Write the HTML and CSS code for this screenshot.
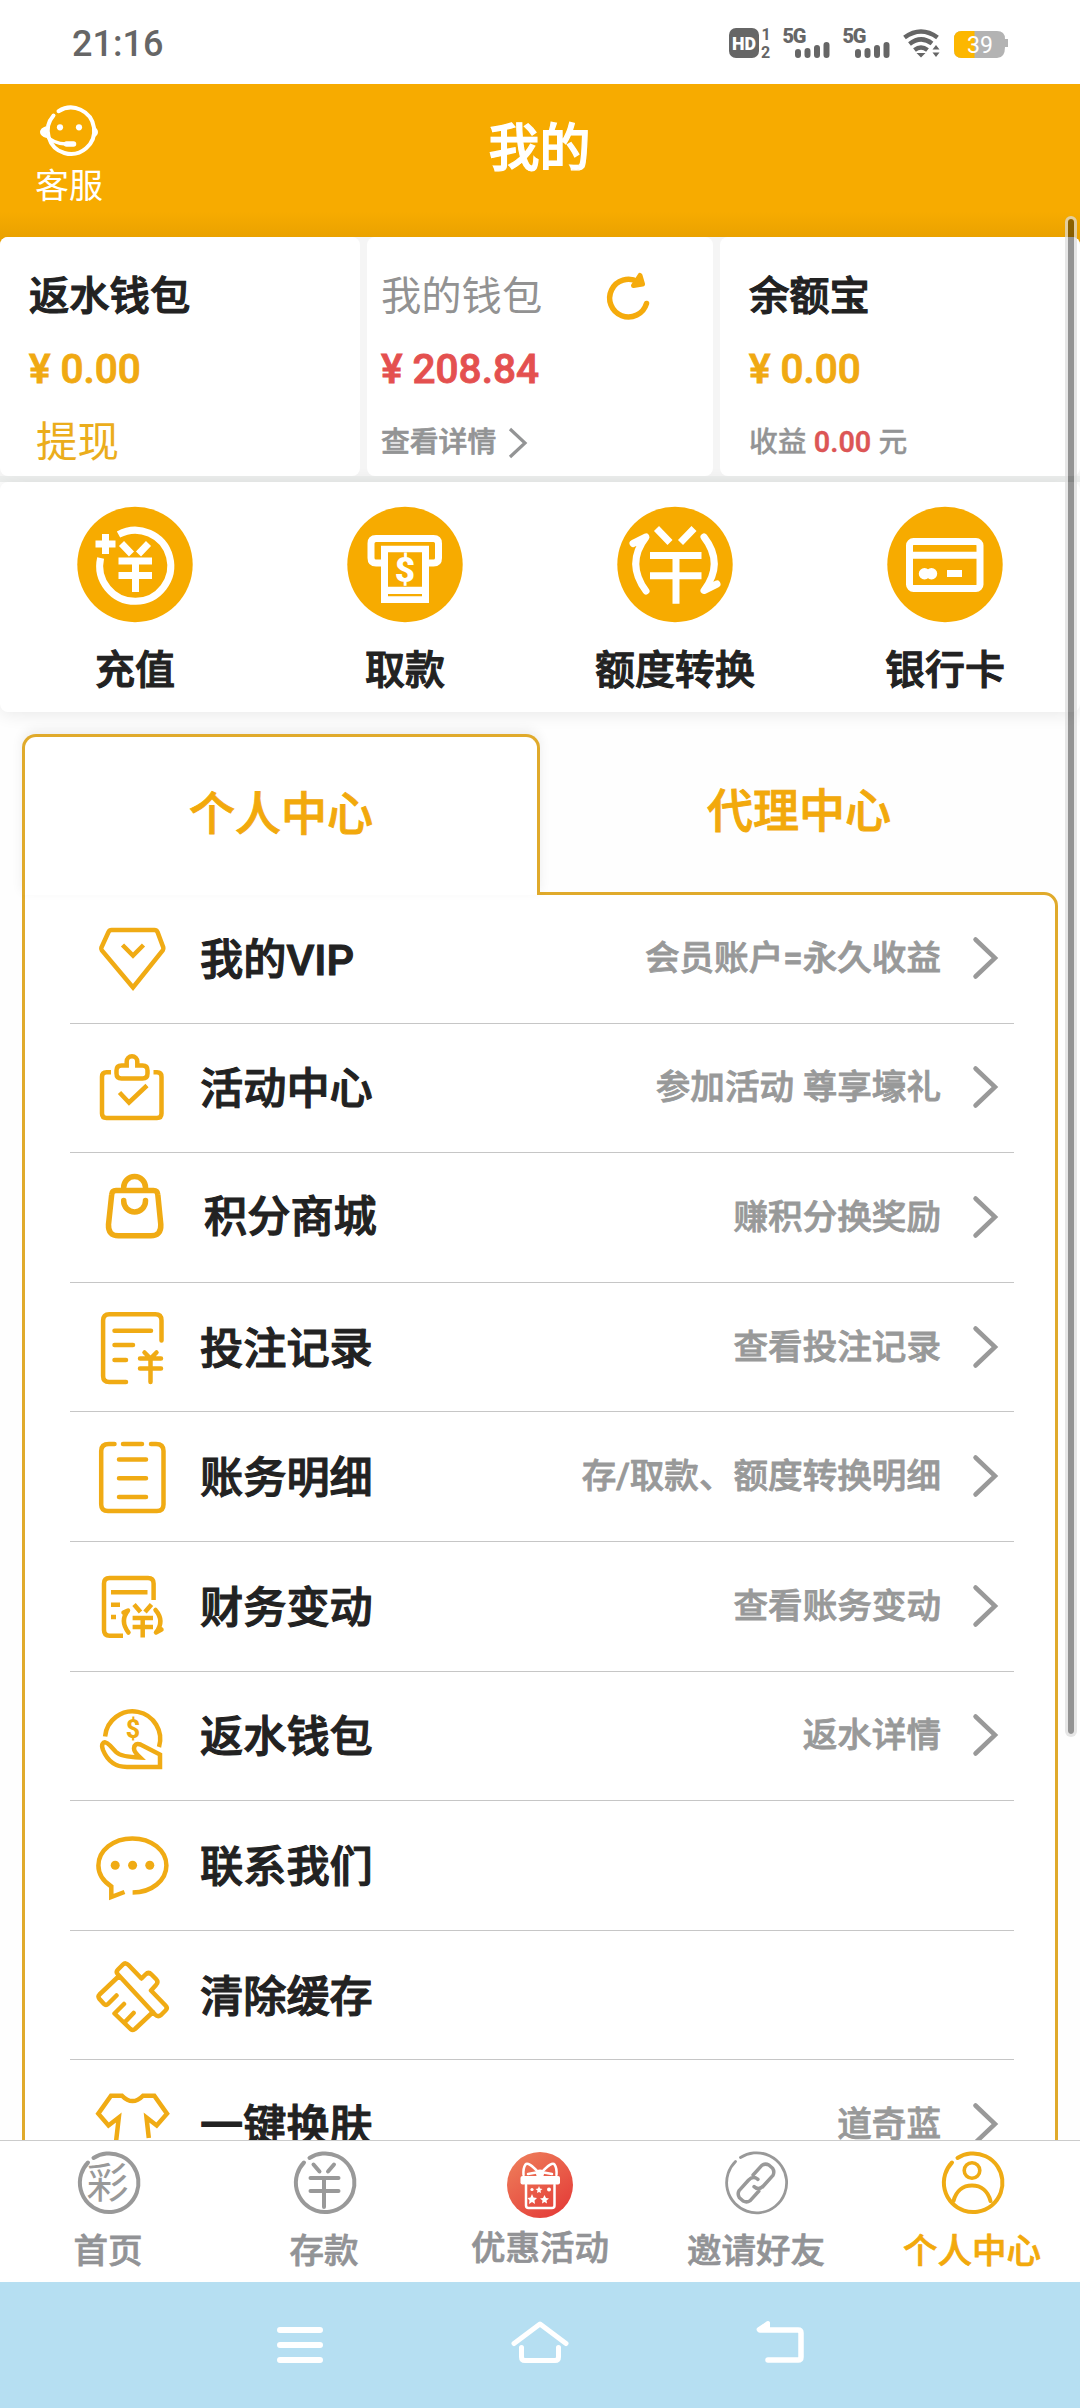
FILE: index.html
```html
<!DOCTYPE html>
<html lang="zh-CN">
<head>
<meta charset="utf-8">
<title>我的</title>
<link rel="stylesheet" href="styles.css">
</head>
<body>
<div class="screen">
  <div class="status">
    <span class="clock">21:16</span>
    <svg class="status-icons" width="282" height="34" viewBox="0 0 282 34">
      <rect x="0" y="2" width="30" height="30" rx="7"/>
      <text class="hd" x="3" y="24" textLength="24" lengthAdjust="spacingAndGlyphs">HD</text>
      <text class="sim" x="32.500" y="14">1</text>
      <text class="sim" x="32" y="31.500">2</text>
      <text class="net" x="53.500" y="16.500" textLength="24">5G</text>
      <path class="bars" d="M69 26v3M78.500 25v4M88 22v7M97.500 19v10"/>
      <text class="net" x="113.500" y="16.500" textLength="24">5G</text>
      <path class="bars" d="M129 26v3M138.500 25v4M148 22v7M157.500 19v10"/>
      <path class="wifi" d="M175.500 11.500Q192 -.5 208.500 11.500M180.500 18Q192 9 203 17.500M185.500 24Q192 19 198.500 24"/>
      <path d="M187.500 27h9l-4.500 4.500zM203.500 23.500l3.500-4.500 3.500 4.500zM203.500 26.500l3.500 4.500 3.500-4.500z"/>
      <path class="batt" d="M233 5h35q8 0 8 8h3v8h-3q0 11-8 11h-35q-8 0-8-8v-11q0-8 8-8z"/>
      <path class="charge" d="M233 5h12.500v27h-12.500q-8 0-8-8v-11q0-8 8-8z"/>
      <text class="pct" x="238" y="26.500">39</text>
    </svg>
  </div>

  <header class="header">
    <div class="service">
      <svg width="60" height="52" viewBox="0 0 60 52">
        <path class="line" d="M19.500 5.200A23.200 23.200 0 1 1 14.500 9.500" stroke-width="4"/>
        <path class="solid" d="M7.500 20Q1 22 1 26t6.500 6zM53.500 20Q59 22 59 26t-5.500 6z"/>
        <circle class="solid" cx="21" cy="21.300" r="3.100"/><circle class="solid" cx="40" cy="21.300" r="3.100"/>
        <path class="line" d="M8 30q6 7.500 19 8" stroke-width="3.500"/>
        <path class="line" d="M27.500 38h7" stroke-width="5.500"/>
      </svg>
      <span>客服</span>
    </div>
    <h1>我的</h1>
  </header>

  <main class="content">
    <section class="wallets">
      <div class="wallet">
        <h2>返水钱包</h2>
        <p class="money">¥ 0.00</p>
        <p class="withdraw">提现</p>
      </div>
      <div class="wallet mine">
        <h2>我的钱包
          <svg width="44" height="50" viewBox="0 0 44 50"><path d="M40.500 32.500A18.800 18.800 0 1 1 32 11" stroke-width="5.500"/><path class="tip" d="M34 4.500L36.500 13 27.500 14.500z" stroke-width="5"/></svg>
        </h2>
        <p class="money red">¥ 208.84</p>
        <p class="sub">查看详情<svg width="20" height="32" viewBox="0 0 20 32"><path d="M2 2L17 16 2 30"/></svg></p>
      </div>
      <div class="wallet">
        <h2>余额宝</h2>
        <p class="money">¥ 0.00</p>
        <p class="sub profit">收益 <b>0.00</b> 元</p>
      </div>
    </section>

    <section class="actions">
      <div class="action">
        <svg viewBox="0 0 116 116"><circle class="disc" cx="58" cy="57.500" r="57.700"/>
          <path d="M41.500 27.500A35.500 35.500 0 1 1 23.600 51M18.500 37h20M28.500 27v20M44.500 36.500l10 10.500M71.500 36.500l-10 10.500M41.500 54h33.500M41.500 68.500h33.500M58.500 54v31"/></svg>
        <span>充值</span>
      </div>
      <div class="action">
        <svg viewBox="0 0 116 116"><circle class="disc" cx="58" cy="57.500" r="57.700"/>
          <path d="M36 56H29q-5 0-5-5V36.500q0-5 5-5H86.500q5 0 5 5V51q0 5-5 5H80"/>
          <path class="fill" d="M34 38.700h48v57.300h-48z"/><path class="disc" d="M41 45.300h34v34.400h-34zM41 87h34v2.300h-34z"/>
          <text x="58" y="75">$</text></svg>
        <span>取款</span>
      </div>
      <div class="action">
        <svg viewBox="0 0 116 116"><circle class="disc" cx="58" cy="57.500" r="57.700"/>
          <path d="M39.500 21.500l13.500 14M77 21.500l-13.500 14M33 48.500h51.500M33 68.700h51.500M59 48.500v48.200"/>
          <path class="round" d="M16 36.500L29 30Q8.500 56.500 29 84M87 30Q107.500 56.500 87 83.500L100 77"/></svg>
        <span>额度转换</span>
      </div>
      <div class="action">
        <svg viewBox="0 0 116 116"><circle class="disc" cx="58" cy="57.500" r="57.700"/>
          <rect class="card" x="22.500" y="34.500" width="70.500" height="47" rx="4"/>
          <path d="M22 48.200h71M60 66.500h15"/><circle class="fill" cx="37.500" cy="66.700" r="5.700"/><circle class="fill" cx="44.500" cy="66.700" r="5.700"/></svg>
        <span>银行卡</span>
      </div>
    </section>

    <nav class="tabs">
      <span class="tab active">个人中心</span>
      <span class="tab">代理中心</span>
    </nav>

    <ul class="menu">
      <li>
        <svg class="ico" viewBox="0 0 72 72"><path d="M15.500 7H58.500q2 0 3 2L67.300 24.500q.4 1.500-.6 3L37 64.500 5.900 27.500q-1-1.500-.5-3L12.500 9q1-2 3-2zM26.500 22L37 32.500 47.500 22"/></svg>
        <span class="name">我的VIP</span><span class="hint">会员账户=永久收益</span><svg class="go" viewBox="0 0 26 44"><path d="M2.500 3.500L22 22 2.500 40.500"/></svg>
      </li>
      <li>
        <svg class="ico" viewBox="0 0 72 72"><path d="M15 20.200H10.500Q6 20.200 6 24.700V61.500Q6 66 10.500 66H61Q65.500 66 65.500 61.500V24.700Q65.500 20.200 61 20.200H57.500M30.700 13.500V9.500a5.300 5.300 0 0 1 10.600 0V13.500H46.500q5 0 5 5v3q0 5-5 5H25.500q-5 0-5-5v-3q0-5 5-5zM23.500 40.500L33 50.500 51 33.500"/></svg>
        <span class="name">活动中心</span><span class="hint">参加活动 尊享壕礼</span><svg class="go" viewBox="0 0 26 44"><path d="M2.500 3.500L22 22 2.500 40.500"/></svg>
      </li>
      <li class="mall">
        <svg class="ico" viewBox="0 0 72 72"><path d="M20 8.500H57.500q4 0 4.300 4L64.800 42.500q.5 11.300-10 11.300H22.500q-10.500 0-10-11.300L15.700 12.500q.3-4 4.300-4zM27.700 8.500V5.500a10.900 10.900 0 0 1 21.800 0V8.500M27.700 18.500v.5a10.900 10.900 0 0 0 21.800 0V18.500"/></svg>
        <span class="name">积分商城</span><span class="hint">赚积分换奖励</span><svg class="go" viewBox="0 0 26 44"><path d="M2.500 3.500L22 22 2.500 40.500"/></svg>
      </li>
      <li>
        <svg class="ico rnd" viewBox="0 0 72 72"><path d="M65.500 28.500V8.500Q65.500 2.300 59.300 2.300H13.200Q7.100 2.300 7.100 8.500V64q0 6 6 6H30M18.500 18.700H55M18.500 33H37M18.500 48H30M48.500 40.500L54.500 46.500 60.500 40.500M44 46.500H65M44 56.500H65M54.500 46V70"/></svg>
        <span class="name">投注记录</span><span class="hint">查看投注记录</span><svg class="go" viewBox="0 0 26 44"><path d="M2.500 3.500L22 22 2.500 40.500"/></svg>
      </li>
      <li>
        <svg class="ico rnd" viewBox="0 0 72 72"><path d="M18.500 3H13Q5.200 3 5.200 10V63.500Q5.200 70 12 70H61Q67.500 70 67.500 63.500V10Q67.500 3 60 3H55M27 3H46M23 18.500H50M23 37.200H50M23 56H50"/></svg>
        <span class="name">账务明细</span><span class="hint">存/取款、额度转换明细</span><svg class="go" viewBox="0 0 26 44"><path d="M2.500 3.500L22 22 2.500 40.500"/></svg>
      </li>
      <li>
        <svg class="ico" viewBox="0 0 72 72"><path d="M57.600 29V12.500Q57.600 7 52 7H13.500Q8 7 8 12.500V59Q8 64.700 13.500 64.700H27M15 21.300H51.500M15 33.700H24M15 46H20M38 33.500L44.500 41M55.500 33.500L49 41M36.600 47H57M36.600 56H57M46.700 47V66.500"/><path class="r" d="M27.500 41.500L32 39.500Q23.500 50 32.500 61.500M59.500 39Q69 50 60 61.500L65.500 58.500"/></svg>
        <span class="name">财务变动</span><span class="hint">查看账务变动</span><svg class="go" viewBox="0 0 26 44"><path d="M2.500 3.500L22 22 2.500 40.500"/></svg>
      </li>
      <li>
        <svg class="ico" viewBox="0 0 72 72"><path d="M9.100 36.500A27.600 27.600 0 1 1 63 47M6.500 44Q8.500 40 14 45.500L20 52Q25 57 44 57.500 38 52 38 48.500 38.500 42.500 44.500 44.500L64 54.500V67H31Q14 67 7 50 5.500 46 6.500 44z"/><text x="37" y="38">$</text></svg>
        <span class="name">返水钱包</span><span class="hint">返水详情</span><svg class="go" viewBox="0 0 26 44"><path d="M2.500 3.500L22 22 2.500 40.500"/></svg>
      </li>
      <li>
        <svg class="ico" viewBox="0 0 72 72"><path d="M36.600 62.500C55.500 62.500 70.400 50.500 70.400 35.500S55.500 8.400 36.400 8.400 2.400 20.500 2.400 35.500Q2.400 48 15.300 56.500V67L28.500 62"/><circle class="dot" cx="19.200" cy="35.300" r="4.500"/><circle class="dot" cx="36.600" cy="35.300" r="4.500"/><circle class="dot" cx="53.800" cy="35.300" r="4.500"/></svg>
        <span class="name">联系我们</span>
      </li>
      <li>
        <svg class="ico rnd" viewBox="0 0 72 72"><path d="M22 9.500L27 4.500Q29.500 2 32.500 5L45.500 18.500 49.500 14.500Q52.500 11.500 55.500 14.500L60 19Q63 22 60 25L55 30.500 69.500 45.500Q72 48 69.500 50.500L65 55Q62 57.500 59 54.500L22 14.500Q19.500 12 22 9.500zM23 16L3.500 34.500Q1.500 36.500 3.500 39L8 44Q10 46 12 44L20.500 35.500M28 44L18.500 53.500 34.500 69Q37 71 39 69L57 52M37.600 53L29 62"/></svg>
        <span class="name">清除缓存</span>
      </li>
      <li>
        <svg class="ico" viewBox="0 0 72 72"><path d="M20 53L22.800 28.500 12.500 36.500 2.300 24.700 15 6.700H26Q36.500 17.500 47 6.700H58.300L71 24.700 60.700 36.500 50.500 28.500 52.800 49"/></svg>
        <span class="name">一键换肤</span><span class="hint">道奇蓝</span><svg class="go" viewBox="0 0 26 44"><path d="M2.500 3.500L22 22 2.500 40.500"/></svg>
      </li>
    </ul>
  </main>

  <nav class="tabbar">
    <div class="item">
      <svg viewBox="0 0 66 66"><path d="M18.500 8A29.300 29.300 0 1 1 13 12.500" stroke-width="4"/><text class="cai" x="32.500" y="48">彩</text></svg>
      <span>首页</span>
    </div>
    <div class="item">
      <svg viewBox="0 0 66 66"><path d="M18.500 8A29.300 29.300 0 1 1 13 12.500M22.500 14.500l6 7M43 14.500l-6 7M19.500 28h28M19.500 41h28M33 28v29" stroke-width="4"/></svg>
      <span>存款</span>
    </div>
    <div class="item promo">
      <svg viewBox="0 0 66 66">
        <defs><linearGradient id="red" x1=".1" y1="0" x2=".8" y2="1"><stop offset="0" stop-color="#ee7f5b"/><stop offset="1" stop-color="#e43c38"/></linearGradient></defs>
        <circle cx="33" cy="33" r="33" fill="url(#red)"/>
        <g class="gift"><path d="M32 21Q21 9 18.500 12.500T16.500 23M34 21Q45 9 47.500 12.500T49.500 23M21 22L32 20M45 22L34 20M19 33V53.500Q19 56 21.500 56H45Q47.500 56 47.500 53.500V33"/>
        <rect class="w" x="13.500" y="24" width="39.500" height="8.500" rx="2"/><circle class="w" cx="33" cy="21.500" r="4"/>
        <path class="w" d="M25 42l1.500 3.500 3.500.5-2.500 2.500.5 3.500-3-2-3 2 .5-3.500-2-2.500 3-.5zM37.500 43l1.500 3 3 .5-2.500 2 .5 3-2.500-1.500-2.500 1.500.5-3-2.500-2 3-.5zM32 34l1 2.500 2.500.5-2 1.500.5 2.500-2-1-2 1 .5-2.500-2-1.500 2.500-.5z"/>
        <circle class="w" cx="42" cy="37.500" r="2"/><circle class="w" cx="25" cy="37.500" r="1.600"/></g>
      </svg>
      <span>优惠活动</span>
    </div>
    <div class="item">
      <svg viewBox="0 0 66 66"><path d="M17.500 7.500A30 30 0 1 1 12.500 11.500" stroke-width="2.800"/><g transform="translate(33 33) rotate(-48)"><path d="M-4 7.500H-17a7 7 0 0 1-5-5v-5a7 7 0 0 1 5-5H-3q7 0 7 6.500M4-7.500H17a7 7 0 0 1 5 5v5a7 7 0 0 1-5 5H3q-7 0-7-6.500" stroke-width="3.500"/></g></svg>
      <span>邀请好友</span>
    </div>
    <div class="item on">
      <svg viewBox="0 0 66 66"><path d="M18.500 8A29.300 29.300 0 1 1 13 12.500M14.500 51C17 41 24 35.500 33 35.500S49 41 51.500 51" stroke-width="4"/><circle cx="33" cy="20.500" r="7.800" stroke-width="3.600"/></svg>
      <span>个人中心</span>
    </div>
  </nav>

  <div class="sysnav">
    <svg viewBox="0 0 60 48"><path d="M10 9h40M10 24h40M10 39h40" stroke-width="6"/></svg>
    <svg viewBox="0 0 60 48"><path d="M4 22.500L30 3 56 22.500M11.500 26.500V36q0 3.500 3.500 3.500H45q3.500 0 3.500-3.500V26.500" stroke-width="5"/></svg>
    <svg viewBox="0 0 60 48"><path d="M10 9H48q3 0 3 3V36q0 3-3 3H18" stroke-width="5.500"/><path class="tip" d="M8.500 8.500L18 2v6.500z" stroke-width="4"/></svg>
  </div>

  <div class="scrollbar"></div>
</div>
</body>
</html>
```
FILE: styles.css
```css
* { box-sizing: border-box; }
body, h1, h2, p, ul { margin: 0; padding: 0; }
body {
  font-family: Roboto, "Noto Sans CJK SC", sans-serif;
  background: #fff;
}
svg { display: block; overflow: visible; flex: none; }
.screen {
  position: relative;
  display: flex;
  flex-direction: column;
  width: 1080px;
  height: 2408px;
  overflow: hidden;
  background: #fefefe;
}

/* system status bar */
.status {
  display: flex;
  align-items: center;
  justify-content: space-between;
  flex: none;
  height: 84px;
  padding: 2px 69px 0 72px;
  background: #fff;
}
.clock { margin-top: 2px; font-size: 36px; font-weight: 500; color: #666; line-height: 44px; }
.status-icons { fill: #666; }
.status-icons text { font-weight: 700; }
.status-icons .hd { fill: #fff; font-size: 19px; font-weight: 900; }
.status-icons .sim { font-size: 16px; }
.status-icons .net { font-size: 20px; font-weight: 900; }
.status-icons .bars { stroke: #666; stroke-width: 6; stroke-linecap: round; }
.status-icons .wifi { fill: none; stroke: #666; stroke-width: 4.500px; }
.status-icons .batt { fill: #b3b3b3; }
.status-icons .charge { fill: #fdb700; }
.status-icons .pct { fill: #fff; font-size: 23px; font-weight: 400; }

/* page header */
.header {
  display: grid;
  grid-template-columns: 1fr auto 1fr;
  flex: none;
  height: 153px;
  padding: 22px 36px 0 35px;
  color: #fff;
  background: linear-gradient(#f7ab00 128px, #eaa200);
}
.service { width: 68px; font-size: 34px; line-height: 44px; }
.service svg { margin: 0 0 6px 4px; }
.service .line { fill: none; stroke: #fff; stroke-linecap: round; }
.service .solid { fill: #fff; }
.header h1 { padding-top: 11px; font-size: 51px; font-weight: 500; line-height: 64px; -webkit-text-stroke: 1.200px #fff; }

.content {
  flex: 1;
  min-height: 0;
  overflow: hidden;
  background: linear-gradient(#eaa200 10px, #fefefe 10px);
}

/* wallet cards */
.wallets {
  display: grid;
  grid-template-columns: 360px 346px 360px;
  column-gap: 7px;
  height: 245px;
  padding-bottom: 6px;
  border-radius: 8px 8px 0 0;
  background: linear-gradient(#f5f5f5 239px, #eceeed 239px);
}
.wallet {
  padding: 30px 0 0 29px;
  background: #fff;
  border-radius: 8px;
}
.wallet.mine { padding-left: 14px; }
.wallet h2 {
  display: flex;
  height: 60px;
  font-size: 40.300px;
  font-weight: 500;
  line-height: 60px;
  color: #222;
  -webkit-text-stroke: 1.100px #222;
}
.wallet.mine h2 { font-weight: 400; color: #929292; -webkit-text-stroke: 0; }
.wallet h2 svg { margin: 4px 0 0 64px; fill: none; stroke: #f5ab0c; stroke-linecap: round; stroke-linejoin: round; }
.wallet h2 .tip { fill: #f5ab0c; }
.money { height: 60px; margin-top: 12px; font-size: 40.500px; font-weight: 500; line-height: 60px; color: #f0a912; -webkit-text-stroke: .9px currentColor; }
.money.red { color: #e4504f; }
.withdraw { margin-top: 14px; padding-left: 7px; font-size: 41.500px; line-height: 60px; color: #ebad1c; }
.sub { display: flex; align-items: center; margin-top: 13px; font-size: 28.800px; font-weight: 500; line-height: 60px; color: #939495; -webkit-text-stroke: .7px currentColor; }
.sub svg { margin: 2px 0 0 12px; fill: none; stroke: #939495; stroke-width: 3.200px; }
.sub.profit { display: block; white-space: pre; -webkit-text-stroke: .3px currentColor; }
.sub b { font-weight: 600; color: #dc5656; }

/* round shortcuts */
.actions {
  display: grid;
  grid-template-columns: repeat(4, 1fr);
  height: 230px;
  padding-top: 25px;
  background: #fff;
  border-radius: 8px;
  box-shadow: 0 2px 18px rgba(0, 0, 0, .09);
}
.action {
  display: flex;
  flex-direction: column;
  align-items: center;
  font-size: 40px;
  font-weight: 500;
  line-height: 60px;
  color: #222;
  -webkit-text-stroke: 1.100px #222;
}
.action svg { width: 116px; height: 116px; margin-bottom: 18px; -webkit-text-stroke: 0; }
.action path, .action .card { fill: none; stroke: #fff; stroke-width: 7; }
.action .disc { fill: #f7ab00; stroke: none; }
.action .fill { fill: #fff; stroke: none; }
.action .round { stroke-linecap: round; stroke-linejoin: round; }
.action text { fill: #fff; font-size: 35px; font-weight: 900; text-anchor: middle; }

/* switch between the two centres */
.tabs { display: grid; grid-template-columns: 518px 518px; height: 180px; padding: 22px 0 0 22px; }
.tab {
  padding-top: 2px;
  font-size: 46px;
  font-weight: 500;
  line-height: 150px;
  text-align: center;
  color: #f2a90c;
  -webkit-text-stroke: .9px #f2a90c;
}
.tab.active {
  position: relative;
  z-index: 1;
  height: 161px;
  border: 3px solid #e0aa2b;
  border-bottom: 0;
  border-radius: 14px 14px 0 0;
  background: #fff;
  box-shadow: 0 -4px 12px rgba(0, 0, 0, .07);
}
.menu {
  margin: 0 22px;
  padding: 0 41px 0 45px;
  list-style: none;
  background: #fff;
  border: 3px solid #e0aa2b;
  border-radius: 0 14px 0 0;
}
.menu li {
  display: flex;
  align-items: center;
  height: 129.600px;
  padding: 0 15px 0 26px;
  border-bottom: 1px solid #c6c6c6;
}
.menu li:first-child { height: 128.700px; }
.menu .ico { width: 72px; height: 72px; margin-top: 1px; fill: none; stroke: #f0ab14; stroke-width: 4.500px; }
.menu .rnd, .menu .r { stroke-linecap: round; stroke-linejoin: round; }
.menu .ico .dot { fill: #f0ab14; stroke: none; }
.menu .ico text { fill: #f0ab14; stroke: none; font-size: 25px; font-weight: 800; text-anchor: middle; }
.menu .mall .ico { stroke-width: 5.500px; stroke-linecap: round; }
.name { margin: 5px 0 0 32px; font-size: 43.200px; font-weight: 500; line-height: 64px; color: #222; -webkit-text-stroke: 1.100px #222; white-space: nowrap; }
.mall .name { margin: 1px 0 0 36px; }
.hint { margin: -1px 0 0 auto; font-size: 34.600px; font-weight: 500; line-height: 50px; color: #989999; -webkit-text-stroke: .8px #989999; white-space: nowrap; }
.go { width: 26px; height: 44px; margin-left: 32px; margin-top: -1px; fill: none; stroke: #999; stroke-width: 4.500px; stroke-linecap: round; }

/* app tab bar */
.tabbar {
  display: grid;
  grid-template-columns: repeat(5, 216px);
  flex: none;
  height: 142px;
  padding-top: 9px;
  background: #fff;
  border-top: 1px solid #ccc;
}
.item {
  display: flex;
  flex-direction: column;
  align-items: center;
  font-size: 34.500px;
  font-weight: 500;
  line-height: 50px;
  color: #929396;
  -webkit-text-stroke: .7px currentColor;
}
.item svg { width: 66px; height: 66px; margin-bottom: 10px; fill: none; stroke: #999; stroke-linecap: round; stroke-linejoin: round; -webkit-text-stroke: 0; }
.item .cai { fill: #999; stroke: none; font-size: 42px; font-weight: 400; text-anchor: middle; }
.item.on { color: #f2a90c; }
.item.on svg { stroke: #efab14; }
.promo svg { margin: 2px 0 5px; }
.gift { stroke: #fff; stroke-width: 2.500px; }
.promo circle, .gift .w { stroke: none; }
.gift .w { fill: #fff; }

/* system navigation keys */
.sysnav {
  display: flex;
  align-items: flex-start;
  justify-content: center;
  gap: 180px;
  flex: none;
  height: 126px;
  padding-top: 39px;
  background: #b6dff2;
}
.sysnav svg { width: 60px; height: 48px; fill: none; stroke: #fff; stroke-linecap: round; stroke-linejoin: round; }
.sysnav .tip { fill: #fff; }

.scrollbar {
  position: absolute;
  top: 216px;
  left: 1065px;
  width: 12px;
  height: 1521px;
  border: 3px solid rgba(221, 221, 221, .72);
  border-radius: 6px;
  background: rgba(0, 0, 0, .42);
  background-clip: padding-box;
}
```
